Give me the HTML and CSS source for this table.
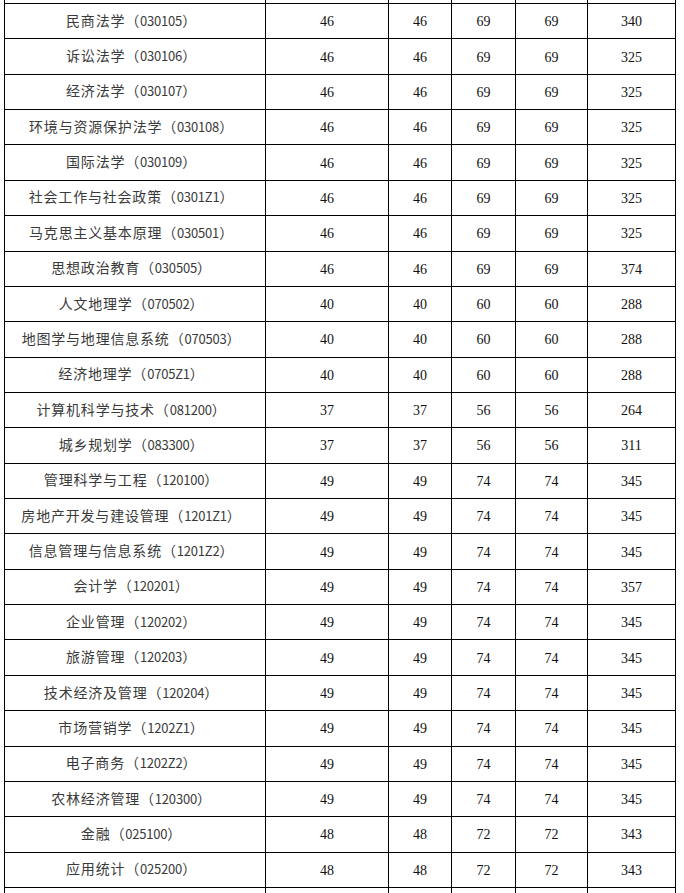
FILE: index.html
```html
<!DOCTYPE html>
<html lang="zh-CN">
<head>
<meta charset="utf-8">
<title>分数线</title>
<link rel="stylesheet" href="styles.css">
</head>
<body>
<table class="score">
<colgroup>
<col class="c-name"><col class="c-a"><col class="c-b"><col class="c-c"><col class="c-d"><col class="c-e">
</colgroup>
<tbody>
<tr class="cut-top"><td></td><td></td><td></td><td></td><td></td><td></td></tr>
<tr><td class="name">民商法学（<span class="code">030105</span>）</td><td>46</td><td>46</td><td>69</td><td>69</td><td>340</td></tr>
<tr><td class="name">诉讼法学（<span class="code">030106</span>）</td><td>46</td><td>46</td><td>69</td><td>69</td><td>325</td></tr>
<tr><td class="name">经济法学（<span class="code">030107</span>）</td><td>46</td><td>46</td><td>69</td><td>69</td><td>325</td></tr>
<tr><td class="name">环境与资源保护法学（<span class="code">030108</span>）</td><td>46</td><td>46</td><td>69</td><td>69</td><td>325</td></tr>
<tr><td class="name">国际法学（<span class="code">030109</span>）</td><td>46</td><td>46</td><td>69</td><td>69</td><td>325</td></tr>
<tr><td class="name">社会工作与社会政策（<span class="code">0301Z1</span>）</td><td>46</td><td>46</td><td>69</td><td>69</td><td>325</td></tr>
<tr><td class="name">马克思主义基本原理（<span class="code">030501</span>）</td><td>46</td><td>46</td><td>69</td><td>69</td><td>325</td></tr>
<tr><td class="name">思想政治教育（<span class="code">030505</span>）</td><td>46</td><td>46</td><td>69</td><td>69</td><td>374</td></tr>
<tr><td class="name">人文地理学（<span class="code">070502</span>）</td><td>40</td><td>40</td><td>60</td><td>60</td><td>288</td></tr>
<tr><td class="name">地图学与地理信息系统（<span class="code">070503</span>）</td><td>40</td><td>40</td><td>60</td><td>60</td><td>288</td></tr>
<tr><td class="name">经济地理学（<span class="code">0705Z1</span>）</td><td>40</td><td>40</td><td>60</td><td>60</td><td>288</td></tr>
<tr><td class="name">计算机科学与技术（<span class="code">081200</span>）</td><td>37</td><td>37</td><td>56</td><td>56</td><td>264</td></tr>
<tr><td class="name">城乡规划学（<span class="code">083300</span>）</td><td>37</td><td>37</td><td>56</td><td>56</td><td>311</td></tr>
<tr><td class="name">管理科学与工程（<span class="code">120100</span>）</td><td>49</td><td>49</td><td>74</td><td>74</td><td>345</td></tr>
<tr><td class="name">房地产开发与建设管理（<span class="code">1201Z1</span>）</td><td>49</td><td>49</td><td>74</td><td>74</td><td>345</td></tr>
<tr><td class="name">信息管理与信息系统（<span class="code">1201Z2</span>）</td><td>49</td><td>49</td><td>74</td><td>74</td><td>345</td></tr>
<tr><td class="name">会计学（<span class="code">120201</span>）</td><td>49</td><td>49</td><td>74</td><td>74</td><td>357</td></tr>
<tr><td class="name">企业管理（<span class="code">120202</span>）</td><td>49</td><td>49</td><td>74</td><td>74</td><td>345</td></tr>
<tr><td class="name">旅游管理（<span class="code">120203</span>）</td><td>49</td><td>49</td><td>74</td><td>74</td><td>345</td></tr>
<tr><td class="name">技术经济及管理（<span class="code">120204</span>）</td><td>49</td><td>49</td><td>74</td><td>74</td><td>345</td></tr>
<tr><td class="name">市场营销学（<span class="code">1202Z1</span>）</td><td>49</td><td>49</td><td>74</td><td>74</td><td>345</td></tr>
<tr><td class="name">电子商务（<span class="code">1202Z2</span>）</td><td>49</td><td>49</td><td>74</td><td>74</td><td>345</td></tr>
<tr><td class="name">农林经济管理（<span class="code">120300</span>）</td><td>49</td><td>49</td><td>74</td><td>74</td><td>345</td></tr>
<tr><td class="name">金融（<span class="code">025100</span>）</td><td>48</td><td>48</td><td>72</td><td>72</td><td>343</td></tr>
<tr><td class="name">应用统计（<span class="code">025200</span>）</td><td>48</td><td>48</td><td>72</td><td>72</td><td>343</td></tr>
<tr class="cut-bottom"><td></td><td></td><td></td><td></td><td></td><td></td></tr>
</tbody>
</table>
</body>
</html>
```

FILE: styles.css
```css
html, body {
  margin: 0;
  padding: 0;
  background: #fff;
  overflow: hidden;
}

.score {
  border-collapse: collapse;
  table-layout: fixed;
  width: 672px;
  margin-left: 4px;
  font-family: "Liberation Serif", serif;
  font-size: 14px;
  color: #111;
}

.c-name { width: 261px; }
.c-a { width: 123px; }
.c-b { width: 63px; }
.c-c { width: 64px; }
.c-d { width: 72px; }
.c-e { width: 88px; }

.score td {
  border: 1px solid #000;
  padding: 2px 0 0 0;
  text-align: center;
  vertical-align: middle;
  line-height: 16px;
  height: 32.36px;
  white-space: nowrap;
  overflow: hidden;
}

.score td.name {
  font-family: "Noto Sans CJK SC", sans-serif;
  font-size: 14px;
  color: #3a3a3a;
  letter-spacing: 0.8px;
  padding: 0 7px 2px 0;
}

.score .code {
  font-size: 13px;
  letter-spacing: -0.2px;
}

.score .cut-top td {
  border-top: none;
  padding: 0;
  height: 3px;
}

.score .cut-bottom td {
  border-bottom: none;
  padding: 0;
  height: 10px;
}
```
